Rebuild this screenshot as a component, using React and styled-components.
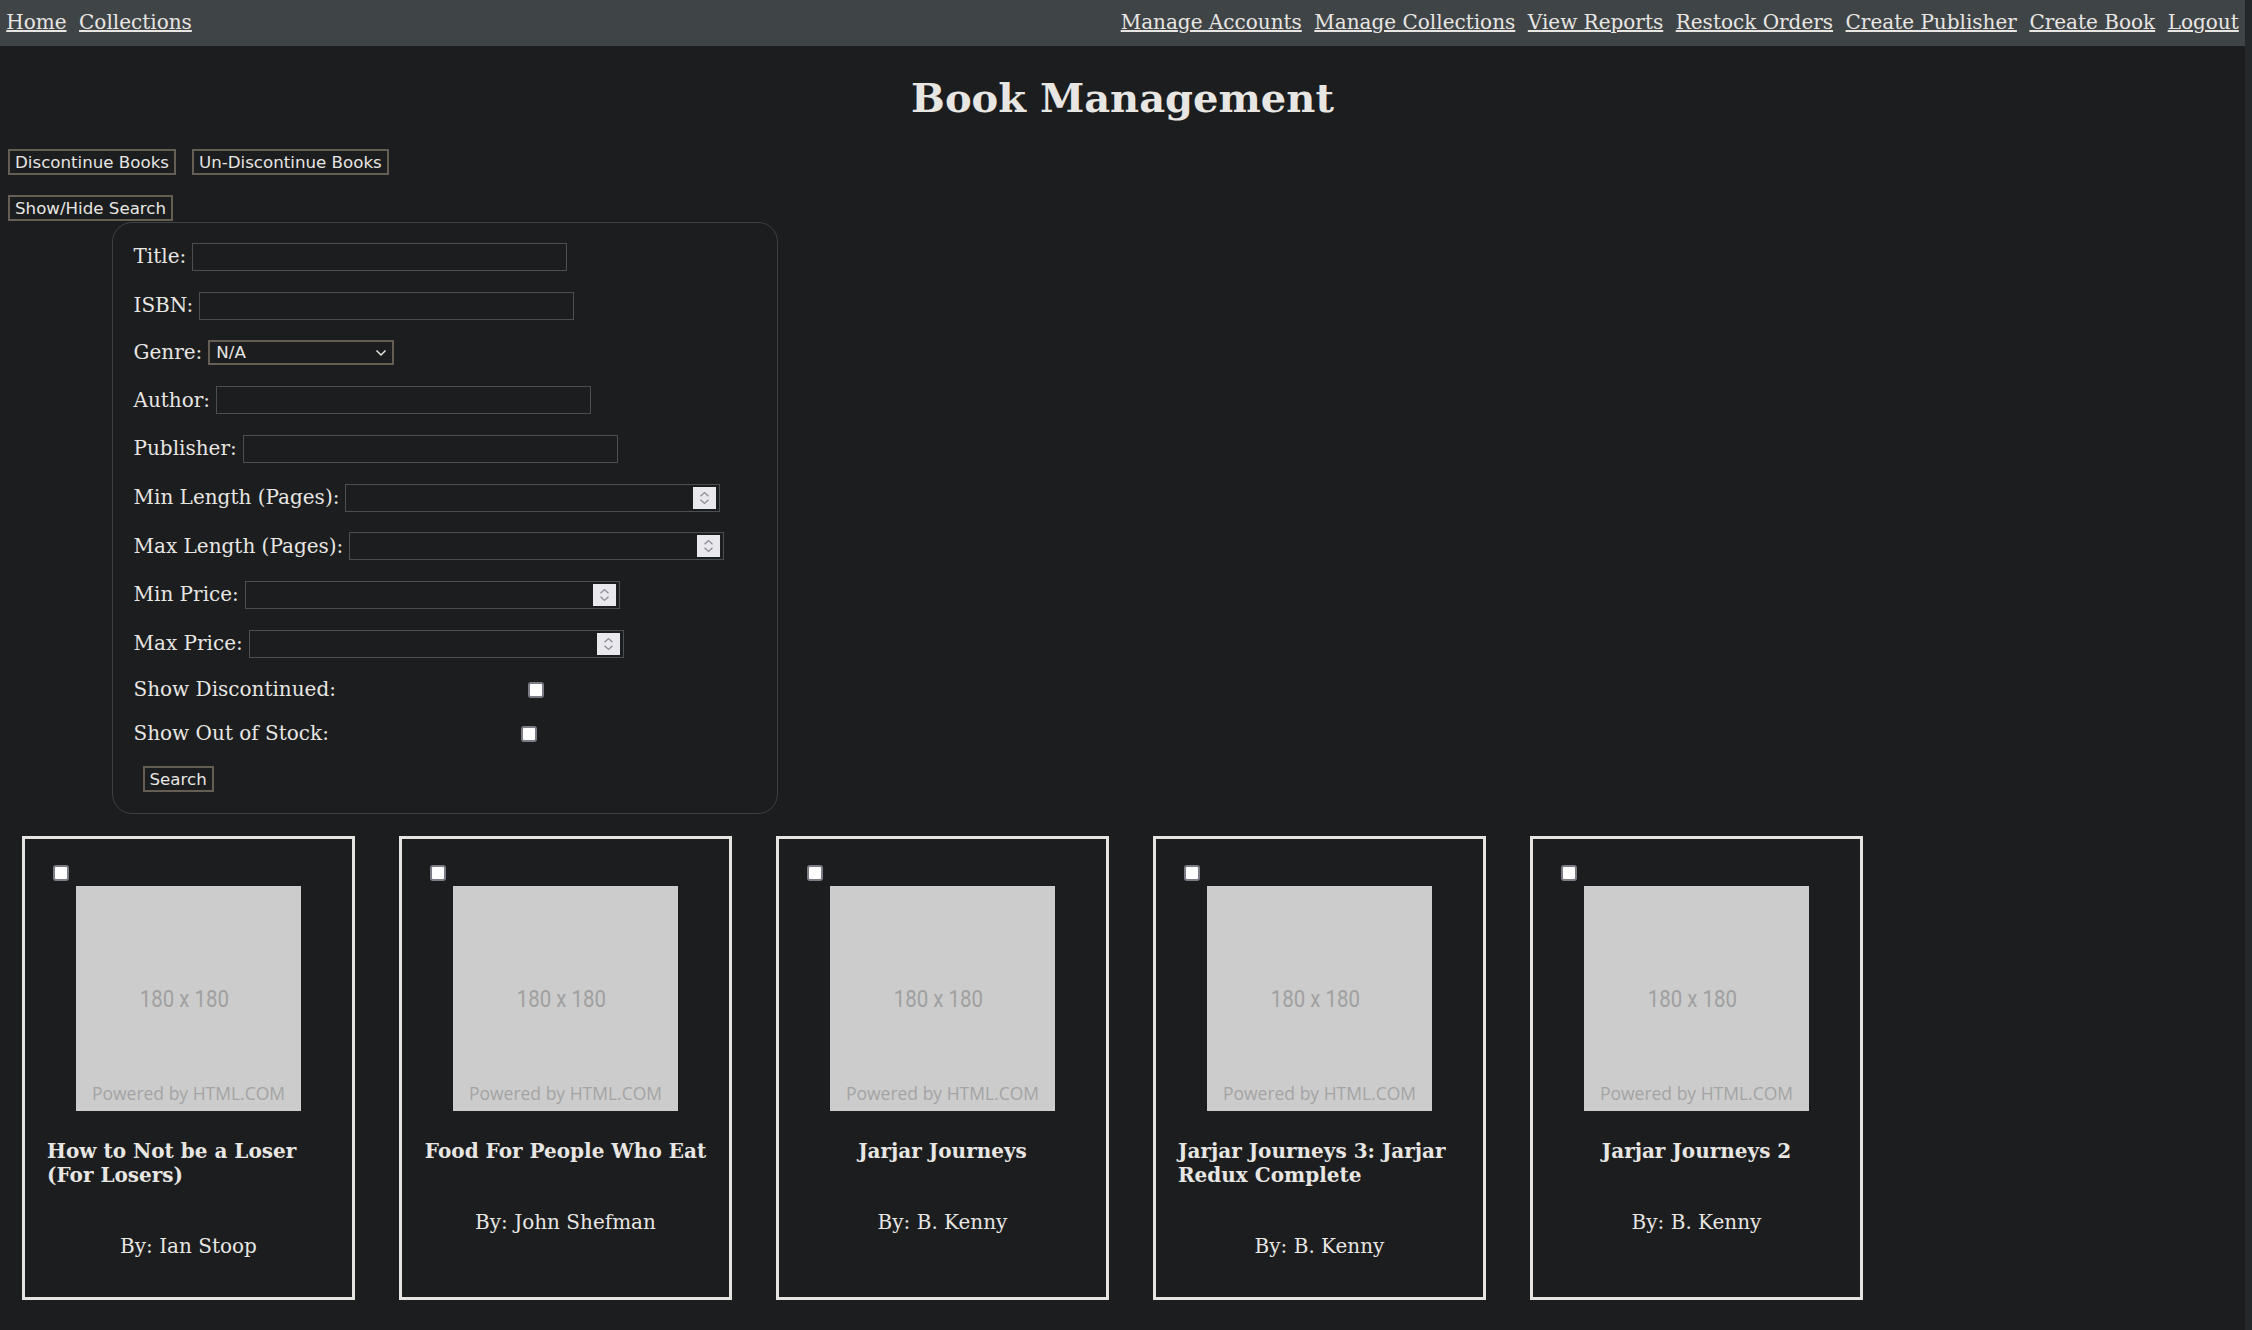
import React from "react";
import styled, { createGlobalStyle } from "styled-components";

const GlobalStyle = createGlobalStyle`
  html {
    background: #25282a;
  }
  body {
    margin: 0 7px 0 0;
    min-height: 100vh;
    background: #1b1d1e;
    color: #e8e6e3;
    font-family: "DejaVu Serif", serif;
    font-size: 20px;
  }
`;

const NavBar = styled.nav`
  display: flex;
  justify-content: space-between;
  align-items: center;
  height: 46px;
  padding-bottom: 2px;
  box-sizing: border-box;
  background: #3f4447;
`;

const NavGroup = styled.div`
  display: flex;
`;

const NavLink = styled.a`
  margin: 0 6.25px;
  color: #e8e6e3;
  text-decoration: underline;
  line-height: 23px;
  cursor: pointer;
`;

const Main = styled.main`
  padding: 0 8px 40px;
`;

const Heading = styled.h1`
  margin: 28.5px 0 28px;
  font-size: 40px;
  line-height: 46.6px;
  font-weight: bold;
  text-align: center;
`;

const ButtonRow = styled.div`
  display: flex;
  gap: 16px;
  margin-bottom: ${(p) => p.$space || 0}px;
`;

const Button = styled.button`
  height: 26px;
  padding: 0 5px;
  box-sizing: border-box;
  border: 2px solid #645e55;
  background: #1b1d1e;
  color: #e8e6e3;
  font-family: "DejaVu Sans", sans-serif;
  font-size: 16.67px;
  line-height: 19px;
  white-space: nowrap;
  align-self: flex-start;
`;

const SearchPanel = styled.form`
  display: flex;
  flex-direction: column;
  gap: 20.7px;
  width: 666px;
  margin: 1px 0 0 104px;
  padding: 20px 20px 20.5px 20.5px;
  box-sizing: border-box;
  border: 1px solid #3c4144;
  border-radius: 20px;
`;

const Row = styled.div`
  display: flex;
  align-items: center;
  gap: 6px;
  padding-left: ${(p) => p.$indent || 0}px;
`;

const Label = styled.label`
  line-height: 23.3px;
  white-space: nowrap;
`;

const TextInput = styled.input`
  width: 375px;
  height: 28px;
  box-sizing: border-box;
  border: 1px solid #4a4f52;
  background: #1b1d1e;
  color: #e8e6e3;
  font-family: "DejaVu Sans", sans-serif;
  font-size: 16.67px;
  outline: none;
`;

const NumberBox = styled.div`
  display: flex;
  align-items: center;
  width: 375px;
  height: 28px;
  box-sizing: border-box;
  padding-right: 3px;
  border: 1px solid #4a4f52;
  background: #1b1d1e;
`;

const BareInput = styled.input`
  flex: 1;
  min-width: 0;
  height: 100%;
  border: 0;
  padding: 0 3px;
  background: transparent;
  color: #e8e6e3;
  font-family: "DejaVu Sans", sans-serif;
  font-size: 16.67px;
  outline: none;
`;

const Spinner = styled.svg`
  flex: none;
  display: block;
  background: #e9e9ed;
`;

const SelectBox = styled.div`
  display: flex;
  align-items: center;
  width: 186px;
  height: 25px;
  box-sizing: border-box;
  padding: 0 5px 0 6px;
  border: 2px solid #645e55;
  background: #1b1d1e;
`;

const Select = styled.select`
  flex: 1;
  min-width: 0;
  appearance: none;
  border: 0;
  padding: 0;
  background: transparent;
  color: #e8e6e3;
  font-family: "DejaVu Sans", sans-serif;
  font-size: 16.67px;
  outline: none;
`;

const Check = styled.input.attrs({ type: "checkbox" })`
  appearance: none;
  flex: none;
  width: 16px;
  height: 16px;
  margin: 0 0 0 ${(p) => p.$offset || 0}px;
  box-sizing: border-box;
  border: 2px solid #7c7c86;
  border-radius: 3px;
  background: #ffffff;
`;

const CardRow = styled.section`
  display: flex;
  gap: 44px;
  margin-top: 22.5px;
  padding-left: 14px;
`;

const Card = styled.article`
  display: flex;
  flex-direction: column;
  align-items: center;
  width: 333px;
  box-sizing: border-box;
  padding: 26px 22px 19px;
  border: 3px solid #e6e4e0;
`;

const CardCheck = styled(Check)`
  align-self: flex-start;
  margin: 0 0 5px 6px;
`;

const Cover = styled.div`
  display: grid;
  grid-template-rows: 1fr auto 1fr;
  justify-items: center;
  flex: none;
  width: 225px;
  height: 225px;
  background: #cccccc;
`;

const CoverSize = styled.span`
  grid-row: 2;
  margin-left: -8px;
  color: #a0a0a0;
  font-family: Roboto, sans-serif;
  font-size: 23.5px;
  transform: scaleX(0.87);
`;

const CoverCredit = styled.span`
  grid-row: 3;
  align-self: end;
  padding-bottom: 6.5px;
  color: #a4a4a4;
  font-family: "Open Sans", sans-serif;
  font-size: 17.5px;
  white-space: nowrap;
`;

const CardTitle = styled.h4`
  margin: 28px 0 27px;
  font-size: 20px;
  line-height: 24px;
  font-weight: bold;
`;

const CardAuthor = styled.p`
  margin: 20px 0;
  line-height: 24px;
  text-align: center;
`;

const leftLinks = ["Home", "Collections"];
const rightLinks = [
  "Manage Accounts",
  "Manage Collections",
  "View Reports",
  "Restock Orders",
  "Create Publisher",
  "Create Book",
  "Logout",
];

const textFields = ["Title", "ISBN"];
const textFields2 = ["Author", "Publisher"];
const numberFields = ["Min Length (Pages)", "Max Length (Pages)", "Min Price", "Max Price"];

const books = [
  { title: "How to Not be a Loser (For Losers)", author: "Ian Stoop" },
  { title: "Food For People Who Eat", author: "John Shefman" },
  { title: "Jarjar Journeys", author: "B. Kenny" },
  { title: "Jarjar Journeys 3: Jarjar Redux Complete", author: "B. Kenny" },
  { title: "Jarjar Journeys 2", author: "B. Kenny" },
];

const SpinIcon = () => (
  <Spinner width="23" height="22" viewBox="0 0 23 22">
    <path d="M7.5 9.2 L11.5 5.6 L15.5 9.2" fill="none" stroke="#8d8d99" strokeWidth="1.4" />
    <path d="M7.5 12.8 L11.5 16.4 L15.5 12.8" fill="none" stroke="#8d8d99" strokeWidth="1.4" />
  </Spinner>
);

const TextRow = ({ label }) => (
  <Row>
    <Label>{label}:</Label>
    <TextInput type="text" />
  </Row>
);

const NumberRow = ({ label }) => (
  <Row>
    <Label>{label}:</Label>
    <NumberBox>
      <BareInput type="text" inputMode="numeric" />
      <SpinIcon />
    </NumberBox>
  </Row>
);

const BookCard = ({ title, author }) => (
  <Card>
    <CardCheck />
    <Cover>
      <CoverSize>180 x 180</CoverSize>
      <CoverCredit>Powered by HTML.COM</CoverCredit>
    </Cover>
    <CardTitle>{title}</CardTitle>
    <CardAuthor>By: {author}</CardAuthor>
  </Card>
);

export default function App() {
  return (
    <>
      <GlobalStyle />
      <NavBar>
        <NavGroup>
          {leftLinks.map((l) => (
            <NavLink key={l}>{l}</NavLink>
          ))}
        </NavGroup>
        <NavGroup>
          {rightLinks.map((l) => (
            <NavLink key={l}>{l}</NavLink>
          ))}
        </NavGroup>
      </NavBar>
      <Main>
        <Heading>Book Management</Heading>
        <ButtonRow $space={20}>
          <Button>Discontinue Books</Button>
          <Button>Un-Discontinue Books</Button>
        </ButtonRow>
        <ButtonRow>
          <Button>Show/Hide Search</Button>
        </ButtonRow>
        <SearchPanel onSubmit={(e) => e.preventDefault()}>
          {textFields.map((f) => (
            <TextRow key={f} label={f} />
          ))}
          <Row>
            <Label>Genre:</Label>
            <SelectBox>
              <Select defaultValue="N/A">
                <option>N/A</option>
              </Select>
              <svg width="12" height="8" viewBox="0 0 12 8">
                <path d="M1.5 1.5 L6 6 L10.5 1.5" fill="none" stroke="#e8e6e3" strokeWidth="1.5" />
              </svg>
            </SelectBox>
          </Row>
          {textFields2.map((f) => (
            <TextRow key={f} label={f} />
          ))}
          {numberFields.map((f) => (
            <NumberRow key={f} label={f} />
          ))}
          <Row>
            <Label>Show Discontinued:</Label>
            <Check $offset={186} />
          </Row>
          <Row>
            <Label>Show Out of Stock:</Label>
            <Check $offset={186} />
          </Row>
          <Row $indent={9}>
            <Button type="submit">Search</Button>
          </Row>
        </SearchPanel>
        <CardRow>
          {books.map((b) => (
            <BookCard key={b.title} {...b} />
          ))}
        </CardRow>
      </Main>
    </>
  );
}
